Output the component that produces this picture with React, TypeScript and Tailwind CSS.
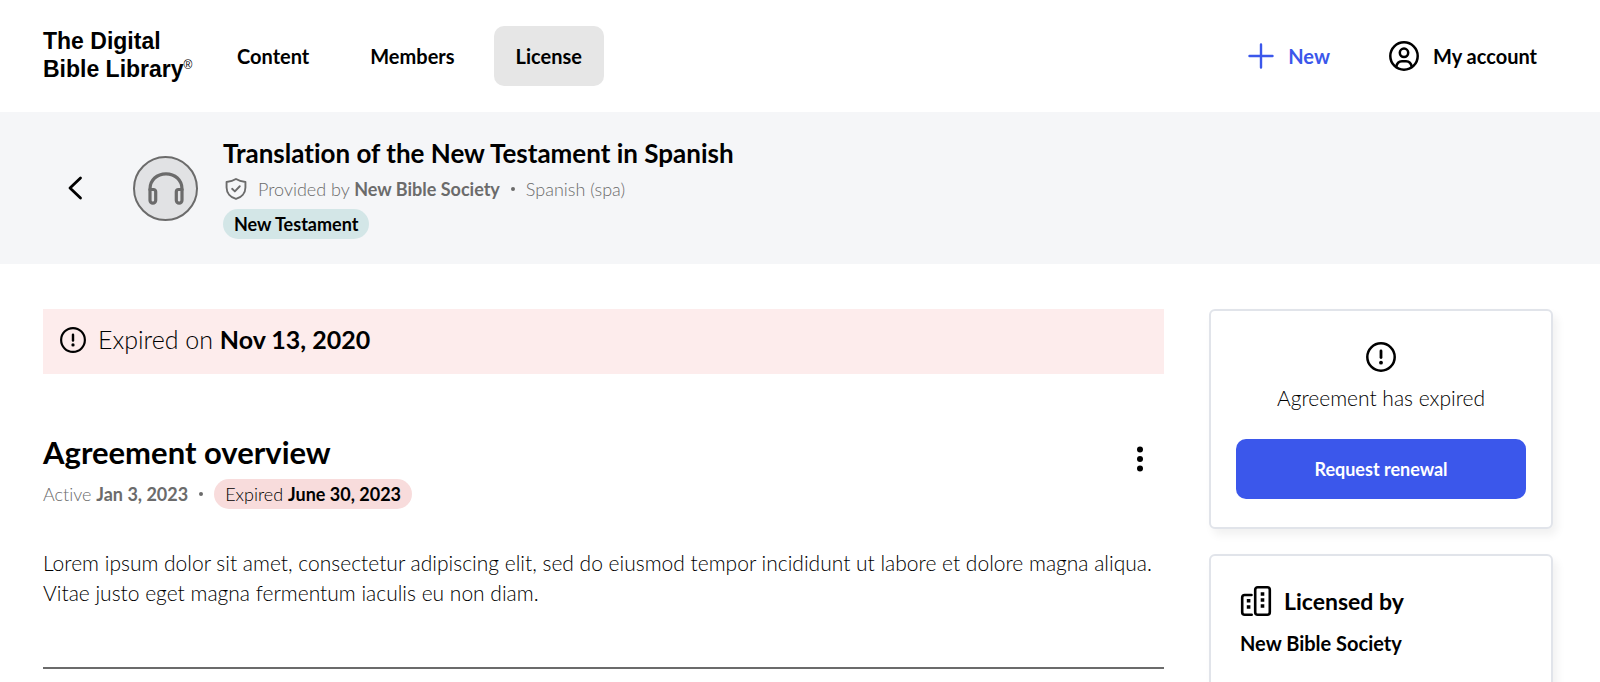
import type { ReactNode } from "react";

const navItems = [
  { label: "Content", active: false },
  { label: "Members", active: false },
  { label: "License", active: true },
];

function AlertIcon({ className }: { className: string }) {
  return (
    <svg className={className} viewBox="0 0 30 30" fill="none" stroke="currentColor" aria-hidden="true">
      <circle cx="15" cy="15" r="13.7" strokeWidth="2.5" />
      <path d="M15 9v6.5" strokeWidth="2.8" strokeLinecap="round" />
      <circle cx="15" cy="20.7" r="1.9" fill="currentColor" stroke="none" />
    </svg>
  );
}

function Card({ children, className }: { children: ReactNode; className: string }) {
  return (
    <section className={`rounded-md border-2 border-[#e1e4ea] bg-white shadow-[4px_6px_10px_rgba(0,0,0,0.06)] ${className}`}>
      {children}
    </section>
  );
}

export default function App() {
  return (
    <div className="min-h-screen overflow-hidden bg-white font-['Lato',sans-serif] text-black [font-variant-ligatures:none]">
      <header className="flex h-28 items-center justify-between pl-[43px] pr-[47px]">
        <div className="flex items-center">
          <a href="#" className="w-[150px] whitespace-nowrap pb-[2px] font-['Liberation_Sans',sans-serif] text-[23px]/7 font-bold">
            The Digital
            <br />
            Bible Library<sup className="-top-2 text-xs font-normal">®</sup>
          </a>
          <nav className="ml-[22px] flex gap-[17px]">
            {navItems.map((item) => (
              <a
                key={item.label}
                href="#"
                aria-current={item.active ? "page" : undefined}
                className={`flex h-[60px] items-center rounded-[10px] px-[22px] text-xl font-bold ${item.active ? "bg-[#e6e6e6]" : ""}`}
              >
                {item.label}
              </a>
            ))}
          </nav>
        </div>

        <div className="flex items-center gap-[27px] text-xl font-bold">
          <button className="flex items-center gap-[14px] px-4 text-[#3b57eb]">
            <svg className="size-[26px]" viewBox="0 0 26 26" fill="none" stroke="currentColor" strokeWidth="2.4" strokeLinecap="round" aria-hidden="true">
              <path d="M13 1.5v23M1.5 13h23" />
            </svg>
            New
          </button>
          <button className="flex items-center gap-[14px] px-4">
            <svg className="size-[30px]" viewBox="0 0 30 30" fill="none" stroke="currentColor" strokeWidth="2.5" aria-hidden="true">
              <circle cx="15" cy="15" r="13.7" />
              <circle cx="15" cy="11.8" r="4.2" />
              <path d="M7.2 26c.6-3.9 3-5.8 5.8-5.8h4c2.8 0 5.2 1.9 5.8 5.8" />
            </svg>
            My account
          </button>
        </div>
      </header>

      <div className="flex h-[152px] items-center bg-[#f5f6f8] pl-[63px]">
        <button aria-label="Back" className="flex w-6 justify-center">
          <svg className="h-6 w-4" viewBox="0 0 16 24" fill="none" stroke="currentColor" strokeWidth="2.8" strokeLinecap="round" strokeLinejoin="round" aria-hidden="true">
            <path d="M13.5 2 3 12l10.5 10" />
          </svg>
        </button>
        <div className="ml-[46px] flex size-[65px] items-center justify-center rounded-full border-2 border-[#6b6b6b] bg-[#e1e2e4] text-[#6b6b6b]">
          <svg className="size-9" viewBox="0 0 36 36" fill="none" stroke="currentColor" strokeWidth="3.2" strokeLinejoin="round" aria-hidden="true">
            <path d="M2 20.5V19C2 10 9 3.8 18 3.800S34 10 34 19v1.5" />
            <path d="M2 19.5h3.5a2.2 2.2 0 0 1 2.2 2.2v8.6a2.8 2.8 0 0 1-5.7 0zM34 19.5h-3.5a2.2 2.2 0 0 0-2.2 2.2v8.6a2.8 2.8 0 0 0 5.7 0z" />
          </svg>
        </div>
        <div className="ml-[25px]">
          <h1 className="text-[26px]/8 font-bold">Translation of the New Testament in Spanish</h1>
          <div className="mt-2 flex items-center text-lg/6 text-[#6b6b6b]">
            <svg className="ml-[2px] size-[22px]" viewBox="0 0 21 21" fill="none" stroke="currentColor" strokeWidth="1.8" strokeLinecap="round" strokeLinejoin="round" aria-hidden="true">
              <path d="M10.5 1Q14 3.2 19.5 3.8v5.200c0 5.500-4 9.500-9 11-5-1.500-9-5.500-9-11V3.800Q7 3.200 10.500 1z" />
              <path d="m6.800 10.300 2.600 2.500 4.700-4.900" />
            </svg>
            <span className="ml-[11px] font-light">
              Provided by <strong className="font-bold">New Bible Society</strong>
            </span>
            <span className="mx-[11px] size-1 rounded-full bg-[#6b6b6b]" />
            <span className="font-light">Spanish (spa)</span>
          </div>
          <div className="mt-2 flex">
            <span className="rounded-full bg-[#d3e6e7] px-[11px] text-lg/[30px] font-bold">New Testament</span>
          </div>
        </div>
      </div>

      <div className="flex items-start gap-[45px] pl-[43px] pr-[47px] pt-[45px]">
        <main className="min-w-0 flex-1">
          <div className="flex h-[65px] items-center bg-[#fdecec] pb-1 pl-[17px] text-[25px]">
            <AlertIcon className="size-[26px]" />
            <p className="ml-3 font-light">
              Expired on <strong className="font-bold">Nov 13, 2020</strong>
            </p>
          </div>

          <div className="mt-[58px] flex items-start justify-between">
            <div>
              <h2 className="text-[31px]/10 font-bold">Agreement overview</h2>
              <div className="mt-[7px] flex items-center text-lg/[30px]">
                <span className="font-light text-[#6b6b6b]">
                  Active <strong className="font-bold">Jan 3, 2023</strong>
                </span>
                <span className="mx-[11px] size-1 rounded-full bg-[#6b6b6b]" />
                <span className="rounded-full bg-[#f8dcdc] px-[11px] font-light">
                  Expired <strong className="font-bold">June 30, 2023</strong>
                </span>
              </div>
            </div>
            <button aria-label="More options" className="mr-[14px] mt-[14px] flex w-5 justify-center">
              <svg className="h-[26px] w-[6px]" viewBox="0 0 6 26" fill="currentColor" aria-hidden="true">
                <circle cx="3" cy="3.5" r="3" />
                <circle cx="3" cy="13" r="3" />
                <circle cx="3" cy="22.5" r="3" />
              </svg>
            </button>
          </div>

          <p className="mt-[39px] text-[21px]/[30px] font-light">
            Lorem ipsum dolor sit amet, consectetur adipiscing elit, sed do eiusmod tempor incididunt ut labore et dolore
            magna aliqua. Vitae justo eget magna fermentum iaculis eu non diam.
          </p>
          <hr className="mt-[59px] border-t-2 border-[#6b6b6b]" />
        </main>

        <aside className="w-[344px] shrink-0">
          <Card className="flex flex-col items-center px-[25px] pb-7 pt-[31px]">
            <AlertIcon className="size-[30px]" />
            <p className="mt-[11px] text-[21px]/[30px] font-light">Agreement has expired</p>
            <button className="mt-[26px] h-[60px] w-full rounded-[10px] bg-[#3b57eb] text-lg font-bold text-white">
              Request renewal
            </button>
          </Card>
          <Card className="mt-[25px] px-[29px] pb-8 pt-[29px]">
            <div className="flex items-center gap-3">
              <svg className="size-8" viewBox="0 0 32 32" fill="none" stroke="currentColor" strokeWidth="2.6" strokeLinecap="round" aria-hidden="true">
                <rect x="15.2" y="2.2" width="14.6" height="27.6" rx="2.5" />
                <path d="M11.5 10H4.700a2.500 2.500 0 0 0-2.500 2.500v14.800a2.500 2.500 0 0 0 2.500 2.500h7" />
                <path d="M6.800 14h3.600v3.600H6.800zM6.800 20.200h3.600v3.600H6.800zM20.700 7.200h3.600v3.600h-3.600zM20.700 13.200h3.600v3.600h-3.600zM20.700 19.200h3.600v3.600h-3.600z" fill="currentColor" stroke="none" />
              </svg>
              <h3 className="text-[23px]/8 font-bold">Licensed by</h3>
            </div>
            <p className="mt-[14px] text-xl/6 font-bold">New Bible Society</p>
          </Card>
        </aside>
      </div>
    </div>
  );
}
